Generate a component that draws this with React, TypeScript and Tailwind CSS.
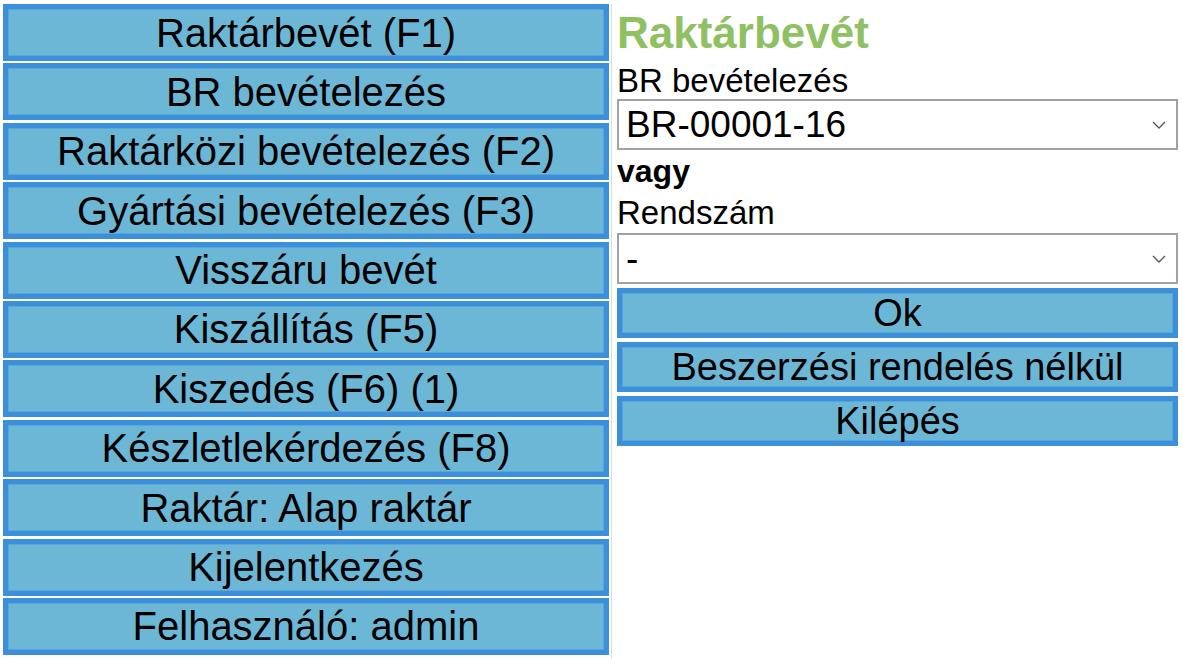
import React from "react";

const leftItems = [
  "Raktárbevét (F1)",
  "BR bevételezés",
  "Raktárközi bevételezés (F2)",
  "Gyártási bevételezés (F3)",
  "Visszáru bevét",
  "Kiszállítás (F5)",
  "Kiszedés (F6) (1)",
  "Készletlekérdezés (F8)",
  "Raktár: Alap raktár",
  "Kijelentkezés",
  "Felhasználó: admin",
];

function Chevron() {
  return (
    <svg width="14" height="8" viewBox="0 0 14 8" className="absolute right-[10px] top-1/2 -translate-y-1/2">
      <polyline points="1,1 7,7 13,1" fill="none" stroke="#555" strokeWidth="1.3" />
    </svg>
  );
}

function Select({ value }: { value: string }) {
  return (
    <div className="relative h-[51px] border-2 border-[#a2a2a2] bg-white flex items-center pl-[7px] text-[37px] leading-none text-black">
      <span>{value}</span>
      <Chevron />
    </div>
  );
}

export default function App() {
  return (
    <div
      className="w-[1183px] h-[659px] bg-white flex pt-[4px] overflow-hidden"
      style={{ fontFamily: '"Liberation Sans", Arial, sans-serif' }}
    >
      <div className="w-[612px] pl-[3px] pr-[2px] border-r border-[#dcdcdc] flex flex-col gap-[2.4px] shrink-0">
        {leftItems.map((t) => (
          <button
            key={t}
            className="h-[57px] w-[606px] border-[5px] border-[#3c8fda] bg-[#6db7d6] shadow-[inset_0_0_0_1px_#59a6d8] flex items-center justify-center text-[40px] leading-none text-black"
          >
            {t}
          </button>
        ))}
      </div>
      <div className="flex-1 pl-[5px] pr-[5px] flex flex-col">
        <div className="h-[58px] leading-[58px] text-[44px] font-bold text-[#8fc163]">Raktárbevét</div>
        <div className="h-[37px] leading-[37px] text-[33px] text-black">BR bevételezés</div>
        <Select value="BR-00001-16" />
        <div className="h-[42px] leading-[42px] text-[32px] font-bold text-black">vagy</div>
        <div className="h-[41px] leading-[41px] text-[33px] text-black">Rendszám</div>
        <Select value="-" />
        <div className="mt-[4px] flex flex-col gap-[4px]">
          {["Ok", "Beszerzési rendelés nélkül", "Kilépés"].map((t) => (
            <button
              key={t}
              className="h-[50px] w-full border-[5px] border-[#3c8fda] bg-[#6db7d6] shadow-[inset_0_0_0_1px_#59a6d8] flex items-center justify-center text-[38px] leading-none text-black"
            >
              {t}
            </button>
          ))}
        </div>
      </div>
    </div>
  );
}
